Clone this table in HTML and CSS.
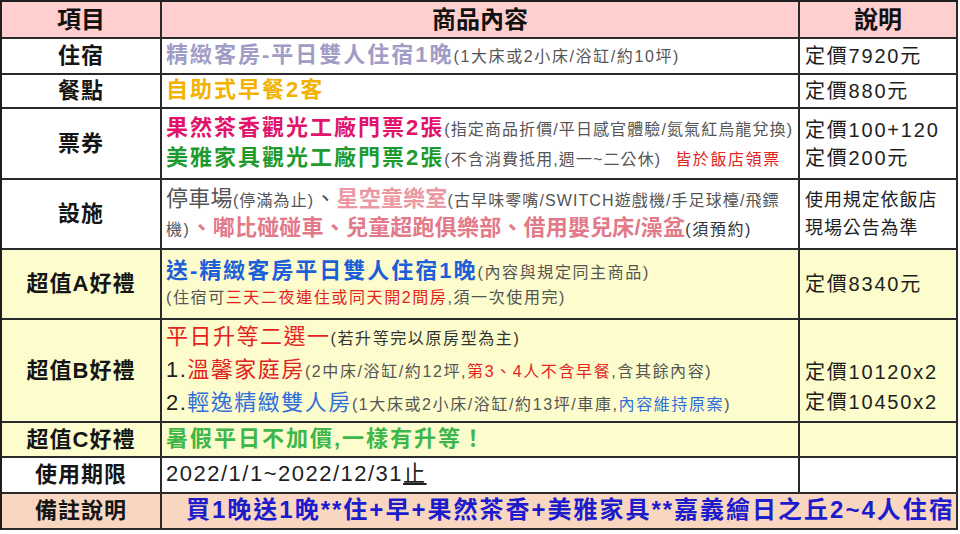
FILE: index.html
```html
<!DOCTYPE html>
<html lang="zh-Hant">
<head>
<meta charset="utf-8">
<title>嘉義繪日之丘 住宿方案</title>
<link rel="stylesheet" href="styles.css">
</head>
<body>
<div class="sheet">
  <div class="cell head">項目</div>
  <div class="cell head">商品內容</div>
  <div class="cell head">說明</div>

  <div class="cell label">住宿</div>
  <div class="cell content">
    <div class="line"><span class="big lav">精緻客房-平日雙人住宿1晚</span><span class="small">(1大床或2小床/浴缸/約10坪)</span></div>
  </div>
  <div class="cell price">定價7920元</div>

  <div class="cell label">餐點</div>
  <div class="cell content">
    <div class="line"><span class="big gold">自助式早餐2客</span></div>
  </div>
  <div class="cell price">定價880元</div>

  <div class="cell label">票券</div>
  <div class="cell content lh28">
    <div class="line"><span class="big crimson">果然茶香觀光工廠門票2張</span><span class="small tight">(指定商品折價/平日感官體驗/氮氣紅烏龍兌換)</span></div>
    <div class="line"><span class="big green">美雅家具觀光工廠門票2張</span><span class="small tight">(不含消費抵用,週一~二公休)</span><span class="small red gap">皆於飯店領票</span></div>
  </div>
  <div class="cell price lh28">
    <div class="line">定價100+120</div>
    <div class="line">定價200元</div>
  </div>

  <div class="cell label">設施</div>
  <div class="cell content lh27">
    <div class="line"><span class="plain">停車場</span><span class="small tight">(停滿為止)</span><span class="plain">、</span><span class="big pink-l">星空童樂室</span><span class="small tight">(古早味零嘴/SWITCH遊戲機/手足球檯/飛鏢</span></div>
    <div class="line"><span class="small">機)</span><span class="big pink">、嘟比碰碰車、兒童超跑俱樂部、借用嬰兒床/澡盆</span><span class="small dark">(須預約)</span></div>
  </div>
  <div class="cell note lh28">
    <div class="line">使用規定依飯店</div>
    <div class="line">現場公告為準</div>
  </div>

  <div class="cell label yel">超值A好禮</div>
  <div class="cell content yel lh25">
    <div class="line"><span class="big blue">送-精緻客房平日雙人住宿1晚</span><span class="small">(內容與規定同主商品)</span></div>
    <div class="line"><span class="small">(住宿可</span><span class="small red">三天二夜連住或同天開2間房</span><span class="small">,須一次使用完)</span></div>
  </div>
  <div class="cell price yel">定價8340元</div>

  <div class="cell label yel">超值B好禮</div>
  <div class="cell content yel lh31">
    <div class="line"><span class="reg red">平日升等二選一</span><span class="small dark">(若升等完以原房型為主)</span></div>
    <div class="line"><span class="reg">1.</span><span class="reg red">溫馨家庭房</span><span class="small">(2中床/浴缸/約12坪,</span><span class="small red">第3、4人不含早餐</span><span class="small">,含其餘內容)</span></div>
    <div class="line"><span class="reg">2.</span><span class="reg blue-l">輕逸精緻雙人房</span><span class="small">(1大床或2小床/浴缸/約13坪/車庫,</span><span class="small blue-l">內容維持原案</span><span class="small">)</span></div>
  </div>
  <div class="cell price yel lh30 shift">
    <div class="line">定價10120x2</div>
    <div class="line">定價10450x2</div>
  </div>

  <div class="cell label yel">超值C好禮</div>
  <div class="cell content yel">
    <div class="line"><span class="big lime">暑假平日不加價,一樣有升等！</span></div>
  </div>
  <div class="cell price yel"></div>

  <div class="cell label">使用期限</div>
  <div class="cell content">
    <div class="line"><span class="reg">2022/1/1~2022/12/31<span class="uline">止</span></span></div>
  </div>
  <div class="cell price"></div>

  <div class="cell label peach">備註說明</div>
  <div class="cell content peach wide">
    <div class="line"><span class="remark">買1晚送1晚**住+早+果然茶香+美雅家具**嘉義繪日之丘2~4人住宿</span></div>
  </div>
</div>
</body>
</html>
```

FILE: styles.css
```css
html, body {
  margin: 0;
  padding: 0;
  background: #ffffff;
}

body {
  font-family: "Liberation Sans", "Noto Sans CJK TC", sans-serif;
  color: #222222;
}

.sheet {
  display: grid;
  grid-template-columns: 160px 638px 158px;
  grid-template-rows: 37px 36px 34px 71px 70px 70px 103px 35px 36px 36px;
  width: max-content;
  border-top: 2px solid #1e1e1e;
  border-left: 2px solid #1e1e1e;
}

.cell {
  box-sizing: border-box;
  border-right: 2px solid #2a2a2a;
  border-bottom: 2px solid #2a2a2a;
  display: flex;
  flex-direction: column;
  justify-content: center;
  white-space: nowrap;
  overflow: visible;
  background: #ffffff;
}

.head {
  background: #ffcfcf;
  align-items: center;
  font-size: 24px;
  font-weight: 700;
  color: #111111;
  line-height: 30px;
}

.label {
  align-items: center;
  font-size: 22px;
  font-weight: 700;
  letter-spacing: 1px;
  color: #151515;
  line-height: 28px;
}

.content {
  padding-left: 4px;
  line-height: 28px;
}

.wide {
  grid-column: span 2;
}

.price {
  padding-left: 5px;
  font-size: 20px;
  letter-spacing: 1.8px;
  color: #1e1e1e;
  line-height: 28px;
}

.note {
  padding-left: 5px;
  font-size: 18px;
  letter-spacing: 0.9px;
  color: #1e1e1e;
}

.shift {
  padding-top: 32px;
}

.lh25 { line-height: 25px; }
.lh27 { line-height: 27px; }
.lh28 { line-height: 28px; }
.lh30 { line-height: 30px; }
.lh31 { line-height: 31px; }

.line {
  display: block;
}

.big {
  font-size: 22px;
  font-weight: 700;
  letter-spacing: 2px;
}

.reg {
  font-size: 22px;
  font-weight: 400;
  letter-spacing: 1.5px;
  color: #1e1e1e;
}

.plain {
  font-size: 22px;
  font-weight: 400;
  letter-spacing: 0.3px;
  color: #555555;
}

.small {
  font-size: 16px;
  font-weight: 400;
  letter-spacing: 1.6px;
  color: #555555;
}

.small.tight {
  letter-spacing: 1.1px;
}

.remark {
  font-size: 24px;
  font-weight: 700;
  letter-spacing: 2px;
  color: #1c1ccc;
  padding-left: 20px;
}

.uline {
  text-decoration: underline;
}

.lav { color: #a19cc6; }
.gold { color: #f2b300; }
.crimson { color: #e2136b; }
.green { color: #1f9a2c; }
.red { color: #e3231f; }
.blue { color: #1d5fd9; }
.blue-l { color: #2f6fda; }
.lime { color: #3db64a; }
.dark { color: #333333; }

.big.pink-l {
  color: #ea98a2;
  letter-spacing: 0.2px;
}

.big.pink {
  color: #e27a89;
  letter-spacing: 0.2px;
}

.small.red { color: #e3231f; }
.small.blue-l { color: #2f6fda; }
.small.dark { color: #333333; }
.reg.red { color: #e3231f; }
.reg.blue-l { color: #2f6fda; }

.gap {
  margin-left: 14px;
}

.yel {
  background: #fcfccc;
}

.peach {
  background: #f9d6bf;
}
```
